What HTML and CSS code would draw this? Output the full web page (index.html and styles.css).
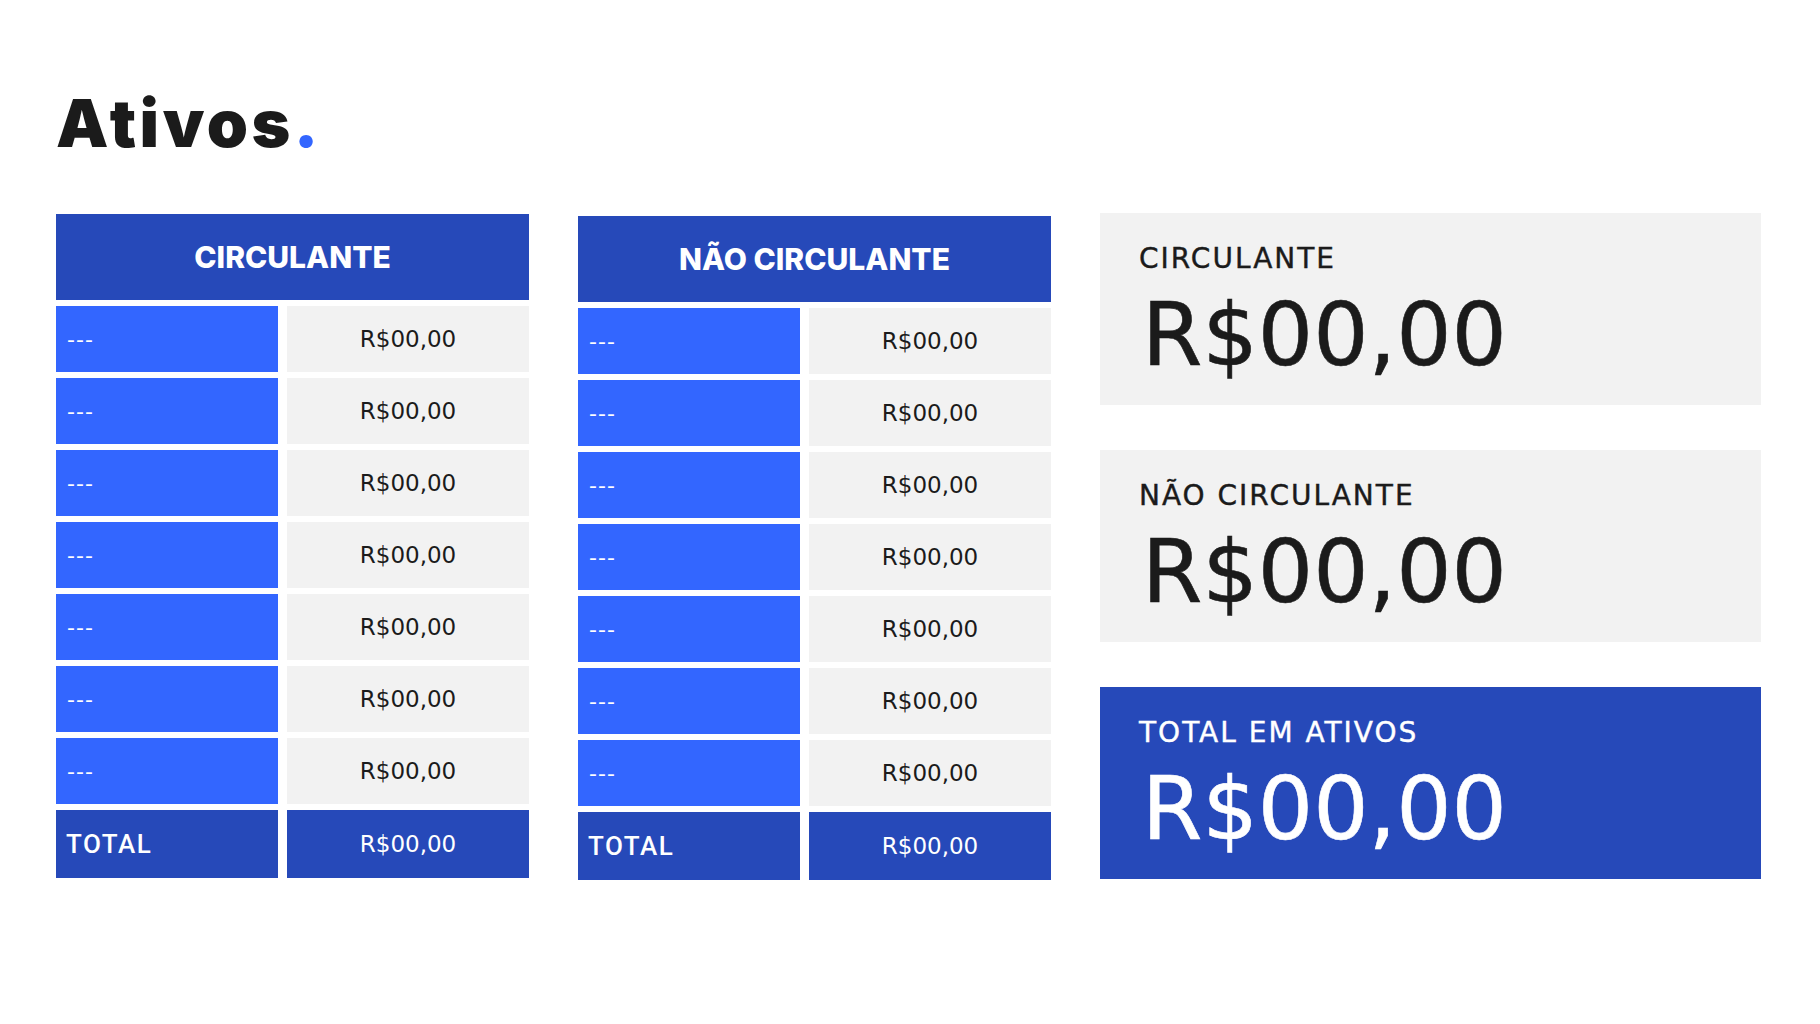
FILE: index.html
```html
<!DOCTYPE html>
<html lang="pt-br">
<head>
    <meta charset="UTF-8">
    <meta name="viewport" content="width=device-width, initial-scale=1.0">
    <title>Ativos</title>
    <link rel="stylesheet" href="styles.css">
</head>
<body>
    <div class="pagina">
        <h1 class="titulo">Ativos<span class="ponto">.</span></h1>

        <div class="conteudo">
            <div class="tabela">
                <div class="cabecalho">CIRCULANTE</div>
                <div class="linha"><div class="item">---</div><div class="valor">R$00,00</div></div>
                <div class="linha"><div class="item">---</div><div class="valor">R$00,00</div></div>
                <div class="linha"><div class="item">---</div><div class="valor">R$00,00</div></div>
                <div class="linha"><div class="item">---</div><div class="valor">R$00,00</div></div>
                <div class="linha"><div class="item">---</div><div class="valor">R$00,00</div></div>
                <div class="linha"><div class="item">---</div><div class="valor">R$00,00</div></div>
                <div class="linha"><div class="item">---</div><div class="valor">R$00,00</div></div>
                <div class="linha total"><div class="item">TOTAL</div><div class="valor">R$00,00</div></div>
            </div>

            <div class="tabela tabela-baixa">
                <div class="cabecalho">NÃO CIRCULANTE</div>
                <div class="linha"><div class="item">---</div><div class="valor">R$00,00</div></div>
                <div class="linha"><div class="item">---</div><div class="valor">R$00,00</div></div>
                <div class="linha"><div class="item">---</div><div class="valor">R$00,00</div></div>
                <div class="linha"><div class="item">---</div><div class="valor">R$00,00</div></div>
                <div class="linha"><div class="item">---</div><div class="valor">R$00,00</div></div>
                <div class="linha"><div class="item">---</div><div class="valor">R$00,00</div></div>
                <div class="linha"><div class="item">---</div><div class="valor">R$00,00</div></div>
                <div class="linha total"><div class="item">TOTAL</div><div class="valor">R$00,00</div></div>
            </div>

            <div class="resumo">
                <div class="cartao">
                    <div class="cartao-titulo">CIRCULANTE</div>
                    <div class="cartao-valor">R$00,00</div>
                </div>
                <div class="cartao">
                    <div class="cartao-titulo">NÃO CIRCULANTE</div>
                    <div class="cartao-valor">R$00,00</div>
                </div>
                <div class="cartao destaque">
                    <div class="cartao-titulo">TOTAL EM ATIVOS</div>
                    <div class="cartao-valor">R$00,00</div>
                </div>
            </div>
        </div>
    </div>
</body>
</html>
```

FILE: styles.css
```css
body {
    margin: 0;
    background-color: #ffffff;
    font-family: "DejaVu Sans", "Liberation Sans", sans-serif;
    color: #1b1b1b;
}

.pagina {
    padding: 84px 0 0 56px;
}

.titulo {
    margin: 0;
    font-family: Inter, "Liberation Sans", sans-serif;
    font-weight: 900;
    font-size: 66px;
    line-height: 78px;
    letter-spacing: 3.5px;
    color: #1b1b1b;
}

.ponto {
    color: #3366ff;
}

.conteudo {
    display: grid;
    grid-template-columns: 473px 473px 661px;
    column-gap: 49px;
    margin-top: 52px;
}

.tabela {
    display: flex;
    flex-direction: column;
    gap: 6px;
}

.tabela-baixa {
    margin-top: 2px;
}

.cabecalho {
    height: 86px;
    display: flex;
    align-items: center;
    justify-content: center;
    background-color: #2649b9;
    color: #ffffff;
    font-family: Inter, "Liberation Sans", sans-serif;
    font-weight: 800;
    font-size: 30px;
}

.linha {
    display: grid;
    grid-template-columns: 222px 1fr;
    column-gap: 9px;
    height: 66px;
}

.item {
    display: flex;
    align-items: center;
    padding-left: 11px;
    background-color: #3366ff;
    color: #ffffff;
    font-size: 22px;
    letter-spacing: 1px;
}

.valor {
    display: flex;
    align-items: center;
    justify-content: center;
    background-color: #f2f2f2;
    font-size: 23px;
    color: #1b1b1b;
}

.total {
    height: 68px;
}

.total .item {
    background-color: #2649b9;
    font-family: Roboto, "Liberation Sans", sans-serif;
    font-size: 26px;
    font-weight: 500;
    letter-spacing: 1.5px;
    padding-left: 10px;
}

.total .valor {
    background-color: #2649b9;
    color: #ffffff;
}

.resumo {
    display: flex;
    flex-direction: column;
    gap: 45px;
    margin-top: -1px;
}

.cartao {
    height: 192px;
    box-sizing: border-box;
    padding: 30px 0 0 39px;
    background-color: #f2f2f2;
}

.cartao-titulo {
    font-size: 28px;
    line-height: 31px;
    letter-spacing: 2px;
    -webkit-text-stroke: 0.4px currentColor;
    color: #1b1b1b;
}

.cartao-valor {
    margin-top: 18px;
    font-size: 87px;
    line-height: 86px;
    text-indent: 3px;
    -webkit-text-stroke: 0.6px currentColor;
    color: #1b1b1b;
}

.destaque {
    background-color: #2649b9;
}

.destaque .cartao-titulo,
.destaque .cartao-valor {
    color: #ffffff;
}
```
